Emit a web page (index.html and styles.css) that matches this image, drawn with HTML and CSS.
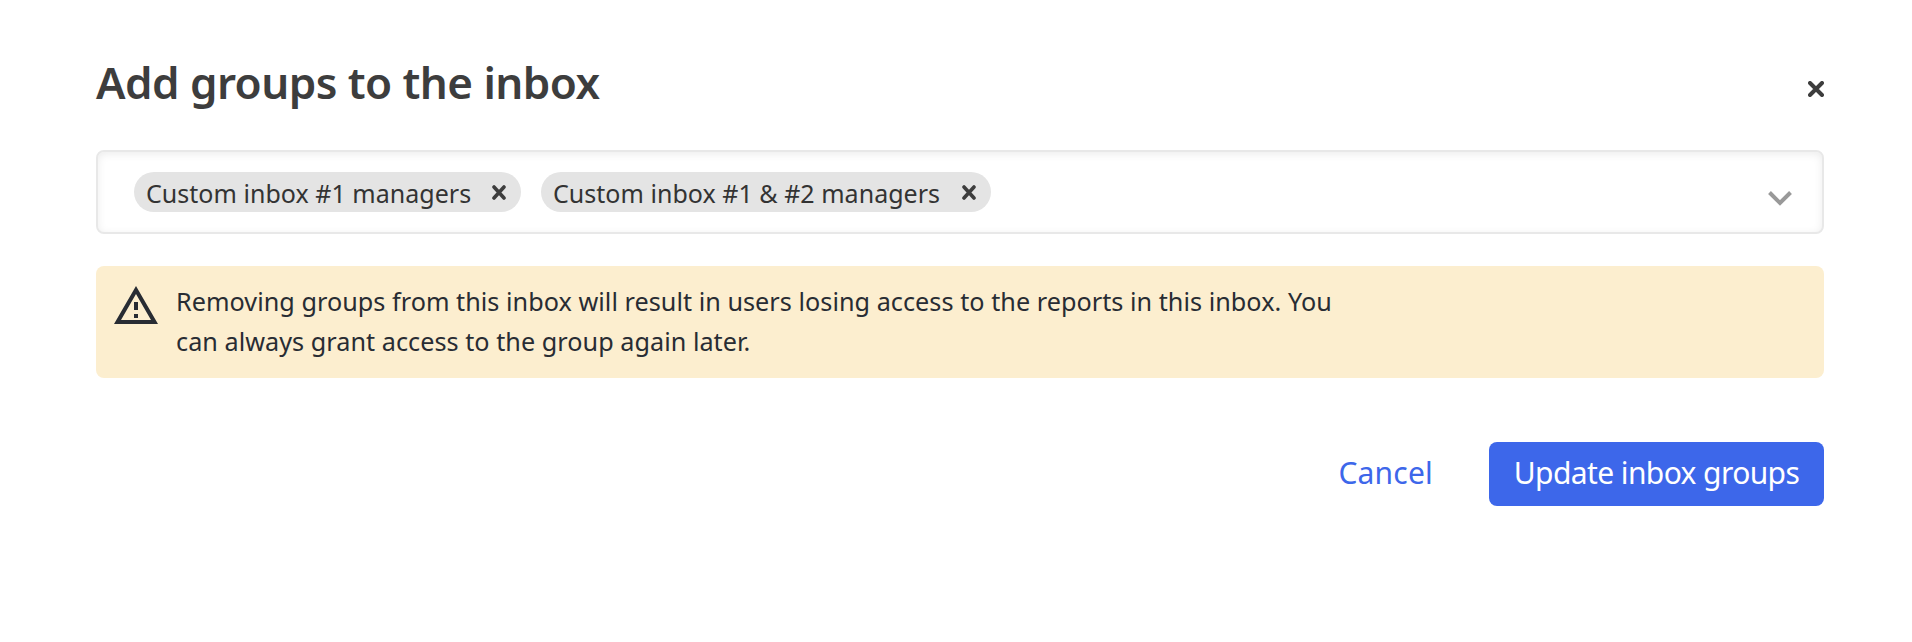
FILE: index.html
```html
<!DOCTYPE html>
<html lang="en">
<head>
<meta charset="utf-8">
<title>Add groups to the inbox</title>
<link rel="stylesheet" href="styles.css">
</head>
<body>
<main class="dialog">
  <header class="header">
    <h1 class="title">Add groups to the inbox</h1>
    <button class="close" aria-label="Close"><svg width="16" height="16" viewBox="0 0 16 16"><path d="M2 2l12 12M14 2L2 14"/></svg></button>
  </header>
  <div class="select">
    <div class="chip"><span class="label">Custom inbox #1 managers</span><svg width="14" height="15" viewBox="0 0 14 15"><path d="M2 2l10 11M12 2L2 13"/></svg></div>
    <div class="chip"><span class="label">Custom inbox #1 &amp; #2 managers</span><svg width="14" height="15" viewBox="0 0 14 15"><path d="M2 2l10 11M12 2L2 13"/></svg></div>
    <svg class="chevron" width="24" height="15" viewBox="0 0 24 15"><path d="M1.500 1.500L12 12l10.500-10.500"/></svg>
  </div>
  <div class="alert">
    <svg class="warning" width="44" height="38" viewBox="0 0 44 38"><path fill-rule="evenodd" d="M22 0L44 38H0ZM22 8L7 34H37Z"/><path d="M20 16h4v8h-4zM20 28h4v4h-4z"/></svg>
    <p class="message">Removing groups from this inbox will result in users losing access to the reports in this inbox. You can always grant access to the group again later.</p>
  </div>
  <footer class="actions">
    <button class="cancel">Cancel</button>
    <button class="submit">Update inbox groups</button>
  </footer>
</main>
</body>
</html>
```
FILE: styles.css
```css
* { box-sizing: border-box; }
body { margin: 0; background: #fff; font-family: "Noto Sans", sans-serif; }
button { border: 0; padding: 0; background: none; font: inherit; }
svg { display: block; flex: none; }
.dialog { padding: 51px 88px 0 96px; }
.header { display: flex; justify-content: space-between; height: 99px; }
.title { margin: 0; padding-top: 1px; font-size: 44px; font-weight: 600; line-height: 60px; letter-spacing: -.55px; color: #3d3d3d; white-space: nowrap; }
.close { align-self: flex-start; margin-top: 30px; }
.close path { stroke: #3d3d3d; stroke-width: 4; stroke-linecap: round; }
.select { display: flex; align-items: center; gap: 20px; height: 84px; padding: 0 30px 0 36px; border: 2px solid #e8e8e8; border-radius: 8px; box-shadow: inset 0 2px 8px rgba(0, 0, 0, .08); }
.chip { display: flex; height: 40px; padding: 0 15px 0 12px; border-radius: 20px; background: #e4e4e4; justify-content: space-between; }
.chip:first-child { width: 387px; }
.chip:nth-child(2) { width: 450px; }
.label { padding-top: 1px; font-size: 25px; line-height: 40px; letter-spacing: .03px; white-space: nowrap; color: #333; }
.chip svg { margin-top: 13px; }
.chip path { stroke: #3d3d3d; stroke-width: 3.6; stroke-linecap: round; }
.chevron { margin: 12px 0 0 auto; }
.chevron path { fill: none; stroke: #999; stroke-width: 4; }
.alert { display: flex; height: 112px; margin-top: 32px; padding: 15px 18px; border-radius: 8px; background: #fceecf; }
.warning { margin-top: 5px; fill: #282c33; }
.message { width: 1170px; margin: 0 0 0 18px; font-size: 25.2px; line-height: 40px; letter-spacing: .04px; color: #282c33; }
.actions { display: flex; justify-content: flex-end; gap: 56px; margin-top: 64px; font-size: 30px; line-height: 62px; }
.cancel { height: 64px; padding-bottom: 2px; color: #3d67ea; letter-spacing: .2px; }
.submit { width: 335px; height: 64px; padding-bottom: 2px; border-radius: 8px; background: #3d67ea; color: #fff; letter-spacing: -.6px; white-space: nowrap; }
```
